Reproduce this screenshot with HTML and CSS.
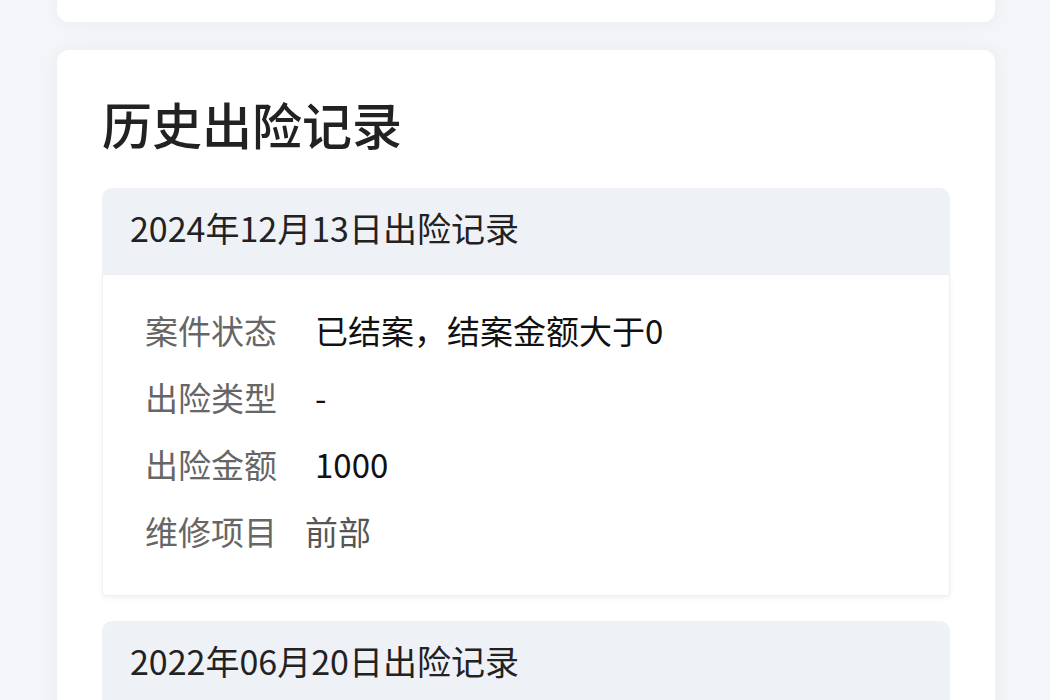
FILE: index.html
```html
<!DOCTYPE html>
<html lang="zh-CN">
<head>
  <meta charset="UTF-8">
  <meta name="viewport" content="width=device-width, initial-scale=1.0">
  <title>历史出险记录</title>
  <link rel="stylesheet" href="styles.css">
</head>
<body>
  <div class="page">
    <div class="card card-prev"></div>

    <div class="card history">
      <h1>历史出险记录</h1>

      <div class="record">
        <div class="record-head">2024年12月13日出险记录</div>
        <div class="record-body">
          <div class="row">
            <span class="label">案件状态</span>
            <span class="value">已结案，结案金额大于0</span>
          </div>
          <div class="row">
            <span class="label">出险类型</span>
            <span class="value">-</span>
          </div>
          <div class="row">
            <span class="label">出险金额</span>
            <span class="value">1000</span>
          </div>
          <div class="row">
            <span class="label">维修项目</span>
            <span class="value value-parts">前部</span>
          </div>
        </div>
      </div>

      <div class="record">
        <div class="record-head">2022年06月20日出险记录</div>
        <div class="record-body">
          <div class="row">
            <span class="label">案件状态</span>
            <span class="value">已结案</span>
          </div>
        </div>
      </div>
    </div>
  </div>
</body>
</html>
```

FILE: styles.css
```css
/* Page */
body {
  margin: 0;
  padding: 0;
  background: #f4f5f8;
  font-family: "Noto Sans CJK SC", "Noto Sans", sans-serif;
  color: #222;
  overflow: hidden;
}

.page {
  width: 938px;
  margin-left: 57px;
  display: flex;
  flex-direction: column;
  gap: 28px;
}

.card {
  background: #fff;
  border-radius: 12px;
  box-shadow: 0 0 18px rgba(40, 50, 80, 0.05);
}

/* previous card, cut off at the top */
.card-prev {
  height: 22px;
  border-radius: 0 0 12px 12px;
}

.history {
  padding: 38px 45px 40px;
}

.history h1 {
  margin: 0 0 30px;
  font-size: 50px;
  line-height: 70px;
  font-weight: 500;
  color: #222;
}

/* Record block */
.record {
  margin-bottom: 25px;
}

.record-head {
  background: #eef1f6;
  border-radius: 10px 10px 0 0;
  height: 87px;
  display: flex;
  align-items: center;
  padding: 0 28px 8px;
  box-sizing: border-box;
  font-size: 34px;
  color: #222;
}

.record-body {
  background: #fff;
  border: 1px solid #f0f0f0;
  border-top: none;
  border-radius: 0 0 3px 3px;
  box-shadow: 0 2px 5px rgba(0, 0, 0, 0.06);
  padding: 21px 0 31px 42px;
}

.row {
  display: flex;
  align-items: center;
  height: 67px;
  font-size: 33px;
}

.label {
  color: #666;
  width: 133px;
}

.value {
  color: #111;
  margin-left: 37px;
}

.value-parts {
  color: #555;
  margin-left: 27px;
}
```
